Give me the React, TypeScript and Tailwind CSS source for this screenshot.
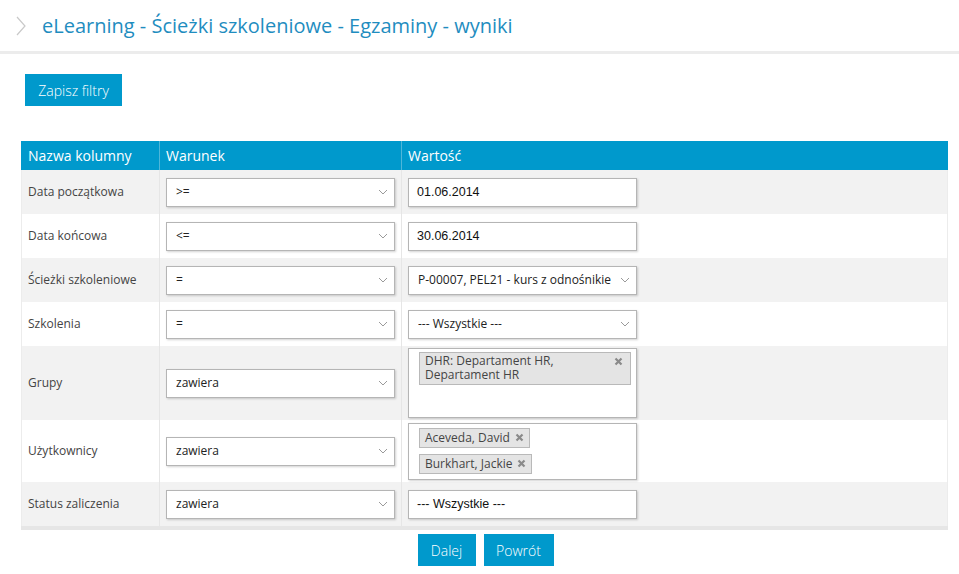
import React from "react";

const font = "font-['Open_Sans','Noto_Sans',sans-serif]";
const arial = "font-['Liberation_Sans',Arial,sans-serif]";

const Chevron = () => (
  <svg width="10" height="6" viewBox="0 0 10 6" className="shrink-0">
    <path d="M1 1l4 4 4-4" fill="none" stroke="#9a9a9a" strokeWidth="1" />
  </svg>
);

const Select = ({ value, className = "" }: { value: string; className?: string }) => (
  <div
    className={`flex h-[29px] w-[229px] items-center justify-between gap-[4px] border border-[#b5b5b5] bg-white pl-[9px] pr-[6px] text-[12px] text-[#222] shadow-[1px_1px_2px_rgba(0,0,0,0.18)] ${className}`}
  >
    <span className="min-w-0 overflow-hidden whitespace-nowrap">{value}</span>
    <Chevron />
  </div>
);

const Input = ({ value }: { value: string }) => (
  <div
    className={`flex h-[29px] w-[229px] items-center border border-[#b5b5b5] bg-white pl-[8px] text-[12.5px] text-[#111] shadow-[1px_1px_2px_rgba(0,0,0,0.18)] ${arial}`}
  >
    {value}
  </div>
);

const Tag = ({ children, wide }: { children: React.ReactNode; wide?: boolean }) => (
  <div
    className={`flex border border-[#b9b9b9] bg-[#e4e4e4] text-[12px] text-[#444] ${
      wide
        ? "w-[212px] items-start justify-between px-[5px] pb-[2px] pt-[1px] leading-[14px]"
        : "h-[20px] items-center gap-[5px] px-[5px] leading-[14px]"
    }`}
  >
    {children}
  </div>
);

const X = () => (
  <svg width="9" height="9" viewBox="0 0 9 9" className="shrink-0">
    <path d="M1.5 1.5l6 6M7.5 1.5l-6 6" stroke="#8a8a8a" strokeWidth="2.2" />
  </svg>
);

type Row = { label: string; height: string; cond: React.ReactNode; value: React.ReactNode };

const rows: Row[] = [
  { label: "Data początkowa", height: "h-[44px]", cond: <Select value=">=" className="text-[11px]" />, value: <Input value="01.06.2014" /> },
  { label: "Data końcowa", height: "h-[44px]", cond: <Select value="<=" className="text-[11px]" />, value: <Input value="30.06.2014" /> },
  {
    label: "Ścieżki szkoleniowe",
    height: "h-[44px]",
    cond: <Select value="=" />,
    value: <Select value="P-00007, PEL21 - kurs z odnośnikie" className="pl-[9px]" />,
  },
  {
    label: "Szkolenia",
    height: "h-[44px]",
    cond: <Select value="=" />,
    value: <Select value="--- Wszystkie ---" className="pl-[9px]" />,
  },
  {
    label: "Grupy",
    height: "h-[74px]",
    cond: <Select value="zawiera" />,
    value: (
      <div className="h-[70px] w-[229px] border border-[#b5b5b5] bg-white pl-[10px] pt-[3px] shadow-[1px_1px_2px_rgba(0,0,0,0.18)]">
        <Tag wide>
          <span>
            DHR: Departament HR,
            <br />
            Departament HR
          </span>
          <span className="mr-[2px] mt-[3px]">
            <X />
          </span>
        </Tag>
      </div>
    ),
  },
  {
    label: "Użytkownicy",
    height: "h-[62px]",
    cond: <Select value="zawiera" />,
    value: (
      <div className="flex h-[57px] w-[229px] flex-col items-start gap-[6px] border border-[#b5b5b5] bg-white pl-[10px] pt-[4px] shadow-[1px_1px_2px_rgba(0,0,0,0.18)]">
        <Tag>
          Aceveda, David <X />
        </Tag>
        <Tag>
          Burkhart, Jackie <X />
        </Tag>
      </div>
    ),
  },
  {
    label: "Status zaliczenia",
    height: "h-[44px]",
    cond: <Select value="zawiera" />,
    value: <Input value="--- Wszystkie ---" />,
  },
];

export default function App() {
  return (
    <div className={`min-h-[574px] w-[959px] bg-white ${font}`}>
      <div className="flex h-[54px] items-center border-b-[3px] border-[#ececec] pl-[16px]">
        <svg width="10" height="20" viewBox="0 0 10 20" className="mr-[16px]">
          <path d="M1 1l8 9-8 9" fill="none" stroke="#c9c9c9" strokeWidth="1.2" />
        </svg>
        <h1 className="text-[20px] text-[#1f8dbf]">eLearning - Ścieżki szkoleniowe - Egzaminy - wyniki</h1>
      </div>

      <div className="px-[21px] pt-[20px]">
        <button className="ml-[4px] h-[32px] w-[97px] bg-[#0099cc] text-[14px] font-light text-white">
          Zapisz filtry
        </button>

        <div className="mt-[35px] w-[927px] border-b-[4px] border-[#e6e6e6]">
          <div className="flex h-[29px] bg-[#0099cc] text-[14px] text-white">
            <div className="flex w-[139px] items-center border-r border-[#4fb6d9] pl-[7px]">Nazwa kolumny</div>
            <div className="flex w-[242px] items-center border-r border-[#4fb6d9] pl-[6px]">Warunek</div>
            <div className="flex flex-1 items-center pl-[6px]">Wartość</div>
          </div>
          {rows.map((r, i) => (
            <div
              key={r.label}
              className={`flex ${r.height} border-x border-[#ececec] ${i % 2 === 0 ? "bg-[#f2f2f2]" : "bg-white"}`}
            >
              <div className="flex w-[138px] items-center border-r border-[#e6e6e6] pl-[6px] text-[12px] text-[#444]">
                {r.label}
              </div>
              <div className="flex w-[242px] items-center border-r border-[#e6e6e6] pl-[6px]">{r.cond}</div>
              <div className="flex flex-1 items-center pl-[6px]">{r.value}</div>
            </div>
          ))}
        </div>

        <div className="mt-[4px] flex justify-center gap-[8px] pl-[12px]">
          <button className="h-[32px] w-[58px] bg-[#0099cc] text-[14px] font-light text-white">Dalej</button>
          <button className="h-[32px] w-[70px] bg-[#0099cc] text-[14px] font-light text-white">Powrót</button>
        </div>
      </div>
    </div>
  );
}
